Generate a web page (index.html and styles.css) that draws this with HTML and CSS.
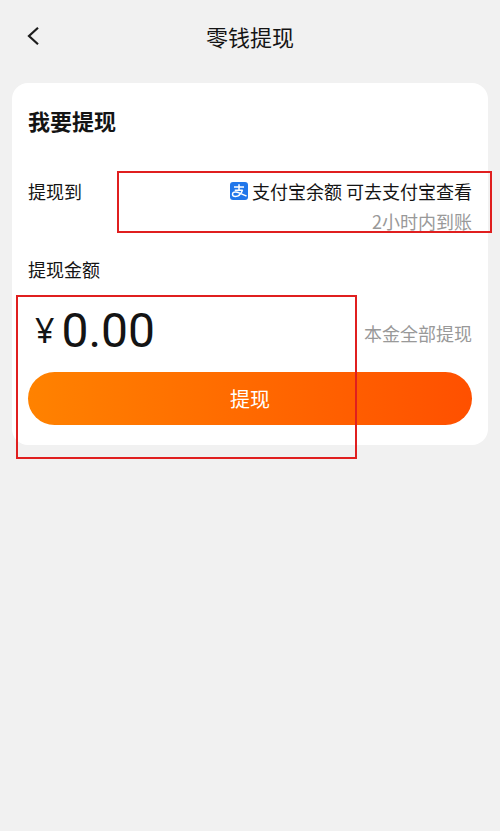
FILE: index.html
```html
<!DOCTYPE html>
<html lang="zh-CN">
<head>
<meta charset="utf-8">
<meta name="viewport" content="width=device-width, initial-scale=1">
<title>零钱提现</title>
<link rel="stylesheet" href="styles.css">
</head>
<body>
<header class="topbar">
  <button class="back" type="button" aria-label="返回">
    <svg width="14" height="20" viewBox="0 0 14 20" fill="none" stroke="#1c1c1c" stroke-width="2.200"><path d="M12 1.800 3 10l9 8.200"/></svg>
  </button>
  <h1 class="title">零钱提现</h1>
</header>
<main class="card">
  <h2 class="heading">我要提现</h2>
  <section class="target">
    <span class="label">提现到</span>
    <div class="account">
      <p class="account-name">
        <svg class="alipay" width="18" height="18" viewBox="0 0 36 36" aria-hidden="true">
          <rect width="36" height="36" rx="6" fill="#2076ea"/>
          <g fill="none" stroke="#fff" stroke-width="3">
            <path d="M8 10h20M18 4.500v12M9.500 16.500h16"/>
            <path d="M25 16.500C22 24 17 29 11 29c-4 0-6-2-6-4.500 0-3 3-5 7-4.500 6 .8 12 5 21 8"/>
          </g>
        </svg>
        <span>支付宝余额 可去支付宝查看</span>
      </p>
      <p class="hint">2小时内到账</p>
    </div>
    <div class="mark mark-account"></div>
  </section>
  <form class="form">
    <label class="label" for="amount">提现金额</label>
    <div class="amount-row">
      <span class="currency">¥</span>
      <input class="amount" id="amount" type="text" inputmode="decimal" value="0.00">
      <button class="all" type="button">本金全部提现</button>
    </div>
    <button class="submit" type="button">提现</button>
    <div class="mark mark-amount"></div>
  </form>
</main>
</body>
</html>
```
FILE: styles.css
```css
* {
  box-sizing: border-box;
}

body {
  min-height: 100vh;
  margin: 0;
  background: #f1f1f1;
  color: #141414;
  font: 18px/30px "Noto Sans CJK SC", sans-serif;
}

h1, h2, p {
  margin: 0;
}

button, input {
  margin: 0;
  padding: 0;
  border: 0;
  background: none;
  color: inherit;
  font: inherit;
}

.topbar {
  display: grid;
  grid-template-columns: 44px 1fr 44px;
  align-items: center;
  height: 72px;
}

.back {
  display: flex;
  justify-content: flex-end;
  padding: 12px 4px;
}

.title {
  font-size: 22px;
  font-weight: 400;
  text-align: center;
}

.card {
  margin: 11px 12px 40px;
  padding: 22px 16px 20px;
  border-radius: 16px;
  background: #fff;
}

.heading {
  font-size: 22px;
  font-weight: 700;
}

.target {
  position: relative;
  display: flex;
  justify-content: space-between;
  margin-top: 41px;
}

.label {
  display: block;
}

.account {
  text-align: right;
}

.account-name {
  display: flex;
  align-items: center;
  justify-content: flex-end;
  gap: 4px;
}

.hint, .all {
  color: #999;
}

.form {
  position: relative;
  margin-top: 18px;
}

.amount-row {
  display: flex;
  align-items: center;
  height: 60px;
  margin-top: 16px;
  padding-left: 7px;
}

.currency {
  font-family: "Noto Sans", sans-serif;
  font-size: 34px;
}

.amount {
  flex: 1;
  min-width: 0;
  height: 60px;
  margin-left: 7px;
  font-family: Roboto, sans-serif;
  font-size: 48px;
  outline: 0;
}

.all {
  margin-top: 6px;
}

.submit {
  display: block;
  width: 100%;
  height: 53px;
  margin-top: 12px;
  border-radius: 27px;
  background: linear-gradient(90deg, #ff8200, #ff5000);
  color: #fff;
  font-size: 20px;
}

/* Red frames that highlight the parts to check */
.mark {
  position: absolute;
  border: 2px solid #e01f1f;
  pointer-events: none;
}

.mark-account {
  top: -5px;
  right: -20px;
  bottom: 3px;
  left: 89px;
}

.mark-amount {
  top: 41px;
  right: 115px;
  bottom: -34px;
  left: -12px;
}
```
